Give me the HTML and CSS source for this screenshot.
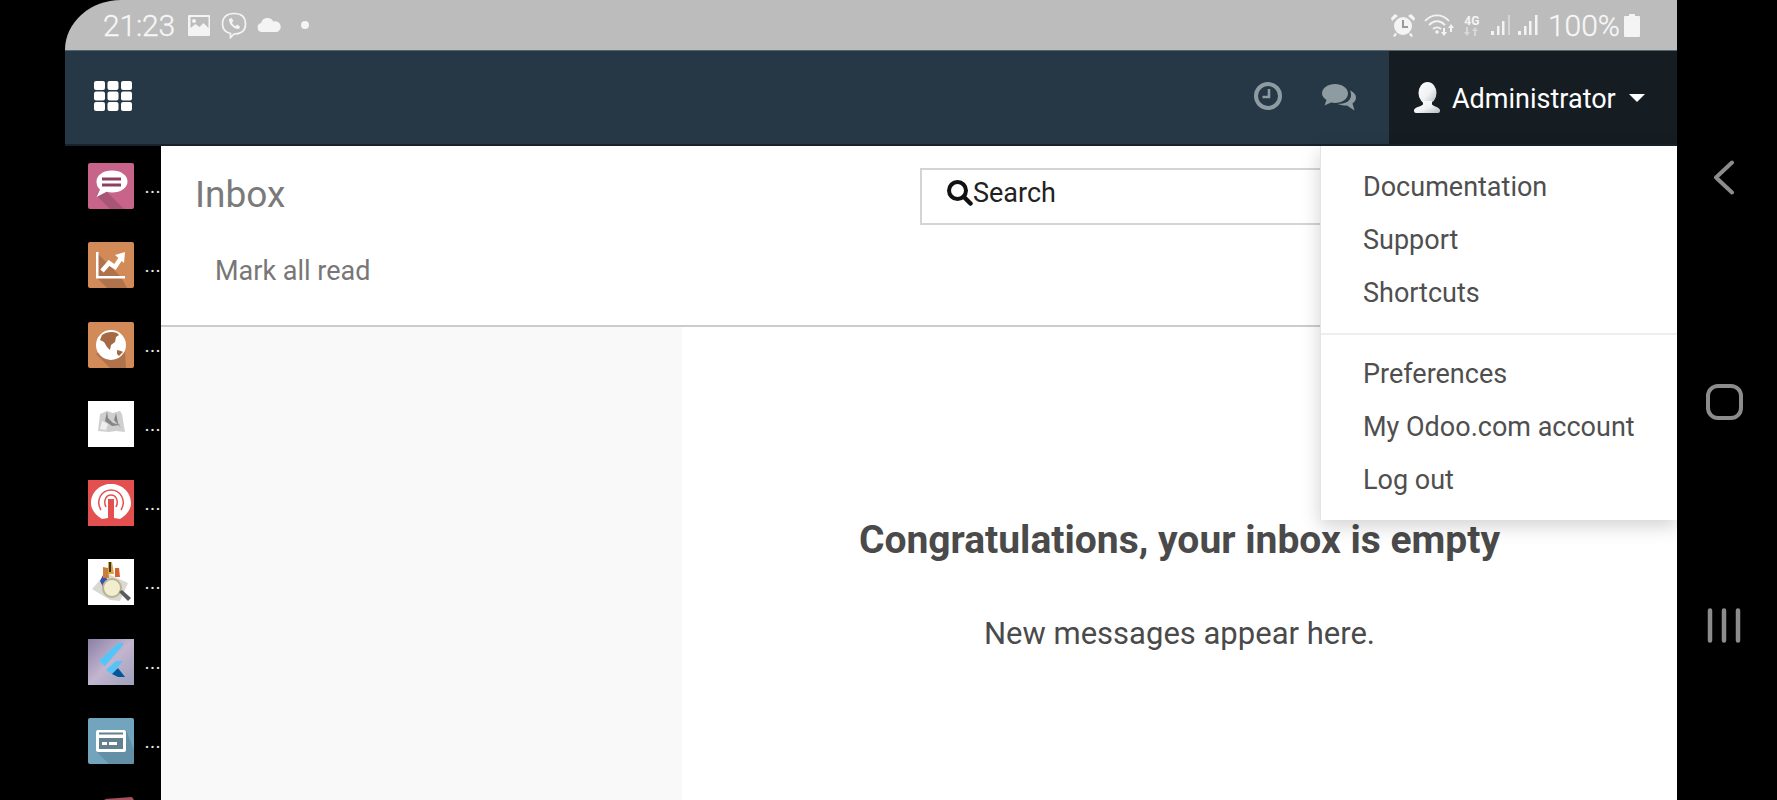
FILE: index.html
```html
<!DOCTYPE html>
<html lang="en">
<head>
<meta charset="utf-8">
<title>Inbox</title>
<link rel="stylesheet" href="styles.css">
</head>
<body>
<div class="device">
  <header class="status">
    <span class="time">21:23</span>
    <svg class="st-image" width="22" height="21" viewBox="0 0 22 21"><path fill="#f4f4f4" fill-rule="evenodd" d="M1 0h20a1 1 0 0 1 1 1v19a1 1 0 0 1-1 1H1a1 1 0 0 1-1-1V1a1 1 0 0 1 1-1zm1.500 2v11l5-4 4 3 4-4 5 5V2zM6 4a2 2 0 1 1 0 4 2 2 0 0 1 0-4z"/></svg>
    <svg class="st-viber" width="26" height="27" viewBox="0 0 26 27"><path fill="none" stroke="#f4f4f4" stroke-width="1.700" d="M13 1.500c7 0 11.500 3.500 11.500 10.500S20 22 13 22l-3.500 3.500V21.500C4 20 1.500 17 1.500 12 1.500 5 6 1.500 13 1.500z"/><path fill="#f4f4f4" d="M8 7l2.500-1 2 3-1.500 1.500c.6 1.800 1.800 3 3.500 3.700L16 12.500l3 2-1 2.500c-5 .5-10.500-5-10-10z"/></svg>
    <svg class="st-cloud" width="25" height="14" viewBox="0 0 25 14"><path fill="#f4f4f4" d="M5 14a4.500 4.500 0 0 1-.8-8.900A6.500 6.500 0 0 1 16.300 3.500 5.500 5.500 0 0 1 20 14z"/></svg>
    <span class="st-dot"></span>
    <span class="st-spacer"></span>
    <svg class="st-alarm" width="26" height="23" viewBox="0 0 26 23"><g fill="#f4f4f4"><path d="M5 0l3 2-6 5-1-3zM21 0l-3 2 6 5 1-3z"/><circle cx="13" cy="12" r="9"/><path d="M5 19l2 1-2 3-2-1zM21 19l-2 1 2 3 2-1z"/></g><path fill="none" stroke="#9a9a9a" stroke-width="2" d="M13 6v7h5"/></svg>
    <svg class="st-wifi" width="32" height="22" viewBox="0 0 32 22"><g fill="none" stroke="#f4f4f4" stroke-width="1.800"><path d="M1 7c7-7.500 17-7.500 24 0"/><path d="M5 11c5-5 11-5 16 0"/><path d="M9 15c3-2.500 5-2.500 8 0"/></g><circle cx="13" cy="18" r="1.800" fill="#f4f4f4"/><path fill="#f4f4f4" d="M19 14h2v4h2l-3 4-3-4h2zM27 10l3 4h-2v4h-2v-4h-2z"/></svg>
    <span class="st-net"><span class="st-4g">4G</span><svg width="17" height="9" viewBox="0 0 17 9"><path fill="#d8d8d8" d="M3 0h2v5h2l-3 4-3-4h2zM12 0l3 4h-2v5h-2V4H9z"/></svg></span>
    <svg class="st-sig" width="20" height="22" viewBox="0 0 20 22"><g fill="#f4f4f4"><rect x="0" y="17" width="3" height="4"/><rect x="6" y="12" width="2.500" height="9"/><rect x="11" y="7" width="2.500" height="14"/></g><rect x="17" y="1" width="2" height="20" fill="#d6d6d6"/></svg>
    <svg class="st-sig2" width="20" height="22" viewBox="0 0 20 22"><g fill="#f4f4f4"><rect x="0" y="17" width="3" height="4"/><rect x="6" y="12" width="2.500" height="9"/><rect x="11" y="7" width="2.500" height="14"/><rect x="17" y="1" width="2.500" height="20"/></g></svg>
    <span class="st-pct">100%</span>
    <svg class="st-batt" width="16" height="23" viewBox="0 0 16 23"><path fill="#f4f4f4" d="M5 0h6v2h4a1 1 0 0 1 1 1v19a1 1 0 0 1-1 1H1a1 1 0 0 1-1-1V3a1 1 0 0 1 1-1h4z"/></svg>
  </header>

  <nav class="navbar">
    <svg class="apps" width="38" height="30" viewBox="0 0 38 30"><g fill="#fff"><rect width="11" height="9" rx="2"/><rect x="13.500" width="11" height="9" rx="2"/><rect x="27" width="11" height="9" rx="2"/><rect y="10.500" width="11" height="9" rx="2"/><rect x="13.500" y="10.500" width="11" height="9" rx="2"/><rect x="27" y="10.500" width="11" height="9" rx="2"/><rect y="21" width="11" height="9" rx="2"/><rect x="13.500" y="21" width="11" height="9" rx="2"/><rect x="27" y="21" width="11" height="9" rx="2"/></g></svg>
    <span class="nav-spacer"></span>
    <svg class="clock" width="28" height="28" viewBox="0 0 28 28"><circle cx="14" cy="14" r="12" fill="none" stroke="#8e9ba1" stroke-width="4"/><path fill="none" stroke="#8e9ba1" stroke-width="2.600" d="M15 7v8H8.500"/></svg>
    <svg class="chat" width="34" height="27" viewBox="0 0 34 27"><path fill="#8e9ba1" d="M13 0c7 0 13 4 13 9.500S20 19 13 19c-1.500 0-3-.2-4-.5L2.500 21.500 4.500 16C1.800 14.300 0 12 0 9.500 0 4 6 0 13 0z"/><path fill="#8e9ba1" d="M28 6.500c3.500 1.500 6 4 6 7 0 2.500-1.500 4.500-3.500 6l2 7-7.500-5c-3 .2-7-.5-9.500-1.500 8 0 13-3 13.500-8 .1-2-.2-4-1-5.500z"/></svg>
    <div class="user">
      <svg class="avatar" width="26" height="31" viewBox="0 0 26 31"><defs><linearGradient id="av" x1="0" y1="0" x2="1" y2="1"><stop offset="0" stop-color="#fff"/><stop offset=".55" stop-color="#eff1f3"/><stop offset="1" stop-color="#b4b9be"/></linearGradient></defs><ellipse cx="13.500" cy="11" rx="9" ry="11" fill="url(#av)"/><path fill="url(#av)" d="M9 19h9v3.500c2.500 2.500 7 2.500 8 5.500.2 1.500-.5 3-2 3H2c-1.500 0-2.200-1.500-2-3 1-3 6.500-3 9-5.500z"/></svg>
      <span class="user-name">Administrator</span>
      <span class="caret"></span>
    </div>
  </nav>

  <div class="body-row">
    <aside class="sidebar">
      <div class="app">
        <svg width="46" height="46" viewBox="0 0 46 46"><rect width="46" height="46" rx="2" fill="#c8638a"/><path fill="#8f4a66" d="M8 32L22 46h14L14 24z" opacity=".55"/><path fill="#fff" d="M24 7.500c9 0 15.500 4.800 15.500 11S33 29.500 24 29.500c-2 0-3.800-.2-5.500-.7L8.500 34l3.500-7.500C9.500 24.500 8.500 21.500 8.500 18.500c0-6.200 6.500-11 15.500-11z"/><path fill="#8e3f5e" d="M14 14.500h19v3H14zM14 20.500h19v3H14z"/></svg>
        <span class="more">...</span>
      </div>
      <div class="app">
        <svg width="46" height="46" viewBox="0 0 46 46"><rect width="46" height="46" rx="2" fill="#d28a58"/><path fill="#a66c47" d="M8 10v25l11 11h20L33 35z" opacity=".8"/><path fill="#fff" d="M8 10h2.500v24H37v2.500H8z"/><path fill="none" stroke="#fff" stroke-width="4.500" d="M14 29l7-8 6 4 6-9"/><path fill="#fff" d="M27 13l10-3-1 11z"/></svg>
        <span class="more">...</span>
      </div>
      <div class="app">
        <svg width="46" height="46" viewBox="0 0 46 46"><rect width="46" height="46" rx="2" fill="#d28a58"/><path fill="#a66c47" d="M8 32L22 46h16L36 14z" opacity=".8"/><circle cx="23" cy="23" r="15" fill="#fff"/><path fill="#a56a45" d="M14 13c4-3 10-4 15-2l2 2-3 2-1 5-4 3-1 5-3-3-3-5-4-2zM29 28l4 1 2 1-4 4-2-2z"/></svg>
        <span class="more">...</span>
      </div>
      <div class="app">
        <svg width="46" height="46" viewBox="0 0 46 46"><rect width="46" height="46" fill="#fff"/><path fill="#cfcfcf" d="M12 13l7-3 6 2 7-2 2 3 3 18-9-1-7 1-11-1z"/><path fill="#858585" d="M19 10l1 7 5 5 7 2-8 1-7-5zM28 12l2 10 3 5-7-8z"/><path fill="#efefef" d="M14 20l6 3-2 6-6-1z"/></svg>
        <span class="more">...</span>
      </div>
      <div class="app">
        <svg width="46" height="46" viewBox="0 0 46 46"><rect width="46" height="46" fill="#e4504f"/><path fill="#fff" d="M14 39C8 35.500 3 30 3 23 3 12 12 4 23 4s20 8 20 19c0 7-5 12.500-11 16l-6-1V20h-6v18z"/><path fill="none" stroke="#e4504f" stroke-width="1.500" d="M13 30c-6-10 1-20 10-20s16 10 10 20M18 27c-3-6 0-12 5-12s8 6 5 12"/><rect x="20" y="19" width="6" height="20" fill="#e4504f"/></svg>
        <span class="more">...</span>
      </div>
      <div class="app">
        <svg width="46" height="46" viewBox="0 0 46 46"><rect width="46" height="46" fill="#fff"/><path fill="#d9d9d2" d="M4 30L18 14l22 10-8 18-10-1z"/><path fill="#3d4fb0" d="M12 22l4-8 5 10-4 8z"/><path fill="#c97f3a" d="M15 8l5 1 1 10-6 0z"/><path fill="#e0a23c" d="M20 3h4l2 12h-6z"/><path fill="#3a3a2a" d="M21 3h2v10h-2z"/><path fill="#d8622e" d="M27 9h4l1 9h-5z"/><circle cx="24" cy="29" r="9" fill="#f3edd0" stroke="#b9b293" stroke-width="2"/><path fill="#5a5a5a" d="M31 33l3-2 9 8-3 3z"/></svg>
        <span class="more">...</span>
      </div>
      <div class="app">
        <svg width="46" height="46" viewBox="0 0 46 46"><defs><linearGradient id="fl" x1="0" y1="0" x2="1" y2="1"><stop offset="0" stop-color="#8a7fa6"/><stop offset=".5" stop-color="#c3b5cf"/><stop offset="1" stop-color="#9ea0bd"/></linearGradient></defs><rect width="46" height="46" fill="url(#fl)"/><path fill="#54c5f8" d="M11 22L30 4h5v2L17 27z"/><path fill="#54c5f8" d="M18 31l10-9h7L24 35z"/><path fill="#01579b" d="M24 35l6-6 7 9h-7z"/></svg>
        <span class="more">...</span>
      </div>
      <div class="app">
        <svg width="46" height="46" viewBox="0 0 46 46"><rect width="46" height="46" rx="2" fill="#72a5bd"/><path fill="#5f8ba1" d="M8 33l13 13h25V32L38 12z" opacity=".8"/><rect x="8" y="12" width="30" height="22" rx="2" fill="#fff"/><rect x="11" y="14.500" width="24" height="2" fill="#63808e"/><rect x="11" y="20" width="24" height="11" fill="#63808e"/><rect x="14" y="24" width="5" height="3" fill="#fff"/><rect x="21" y="24" width="8" height="3" fill="#fff"/></svg>
        <span class="more">...</span>
      </div>
      <div class="app">
        <svg width="46" height="46" viewBox="0 0 46 46"><path fill="#a5505c" d="M16 2L44 0l2 3H18z"/></svg>
        <span class="more more-hidden">...</span>
      </div>
    </aside>

    <main class="content">
      <section class="panel">
        <div class="panel-top">
          <h1 class="title">Inbox</h1>
          <div class="search">
            <svg class="search-icon" width="26" height="26" viewBox="0 0 26 26"><circle cx="10.500" cy="10.500" r="8.500" fill="none" stroke="#111" stroke-width="4"/><path stroke="#111" stroke-width="4.500" stroke-linecap="round" d="M17 17l6.500 6.500"/></svg>
            <span class="search-label">Search</span>
          </div>
        </div>
        <a class="mark-read">Mark all read</a>
      </section>
      <section class="panes">
        <div class="pane-left"></div>
        <div class="pane-right">
          <h2 class="empty-title">Congratulations, your inbox is empty</h2>
          <p class="empty-text">New messages appear here.</p>
        </div>
      </section>
    </main>

    <div class="menu">
      <a class="menu-item">Documentation</a>
      <a class="menu-item">Support</a>
      <a class="menu-item">Shortcuts</a>
      <div class="menu-sep"></div>
      <a class="menu-item">Preferences</a>
      <a class="menu-item">My Odoo.com account</a>
      <a class="menu-item">Log out</a>
    </div>
  </div>
</div>

<div class="softkeys">
  <svg width="22" height="35" viewBox="0 0 22 35"><path fill="none" stroke="#8c8c8c" stroke-width="4" stroke-linecap="round" stroke-linejoin="round" d="M19 2.500L3 17.500 19 32.500"/></svg>
  <svg width="37" height="36" viewBox="0 0 37 36"><rect x="2" y="2" width="33" height="32" rx="10" fill="none" stroke="#8c8c8c" stroke-width="4"/></svg>
  <svg width="34" height="35" viewBox="0 0 34 35"><g stroke="#8c8c8c" stroke-width="4.500" stroke-linecap="round"><path d="M3 2.500v30M17 2.500v30M31 2.500v30"/></g></svg>
</div>
</body>
</html>
```
FILE: styles.css
```css
* { box-sizing: border-box; }
html, body { margin: 0; height: 800px; overflow: hidden; }
body {
  display: flex;
  width: 1777px;
  background: #000;
  font-family: Roboto, "Noto Sans", sans-serif;
}
.device {
  width: 1612px;
  height: 800px;
  margin-left: 65px;
  display: flex;
  flex-direction: column;
  overflow: hidden;
}
.status {
  height: 50px;
  flex: none;
  display: flex;
  align-items: center;
  background: #bcbcbc;
  border-top-left-radius: 56px 50px;
  padding: 0 37px 0 38px;
}
.time { font-size: 30px; font-weight: 300; color: #f7f7f7; margin-right: 13px; letter-spacing: -.2px; -webkit-text-stroke: .3px #f7f7f7; }
.st-image { margin-right: 11px; }
.st-viber { margin-right: 10px; }
.st-cloud { margin-right: 19px; }
.st-dot { width: 8px; height: 8px; border-radius: 50%; background: #f4f4f4; }
.st-spacer { flex: 1; }
.st-alarm { margin-right: 8px; }
.st-wifi { margin-right: 7px; }
.st-net { display: flex; flex-direction: column; align-items: center; width: 18px; margin-right: 10px; }
.st-4g { font-size: 12px; font-weight: 700; line-height: 12px; color: #f4f4f4; }
.st-sig { margin-right: 7px; }
.st-sig2 { margin-right: 10px; }
.st-pct { font-size: 30px; font-weight: 300; color: #f7f7f7; margin-right: 4px; -webkit-text-stroke: .3px #f7f7f7; }
.navbar {
  height: 96px;
  flex: none;
  display: flex;
  align-items: center;
  background: #263845;
  border-top: 1px solid #52656f;
  border-bottom: 2px solid #16232c;
  padding-left: 29px;
}
.apps { margin-bottom: 3px; }
.nav-spacer { flex: 1; }
.clock { margin: 0 40px 3px 0; }
.chat { margin: 0 33px 0 0; }
.user {
  width: 288px;
  height: 100%;
  display: flex;
  align-items: center;
  background: #151d23;
  padding-left: 25px;
}
.user-name { font-size: 27px; color: #fff; margin-left: 12px; position: relative; top: 1px; }
.caret {
  margin-left: 13px;
  border-left: 8px solid transparent;
  border-right: 8px solid transparent;
  border-top: 8px solid #fff;
}
.body-row { flex: 1; min-height: 0; display: flex; position: relative; }
.sidebar {
  width: 96px;
  flex: none;
  padding: 17px 0 0 23px;
  overflow: hidden;
  background: #000;
}
.app { height: 79.25px; display: flex; align-items: flex-start; }
.app svg { flex: none; display: block; }
.more {
  color: #eee;
  font-size: 14px;
  font-weight: 700;
  line-height: 14px;
  letter-spacing: 1.5px;
  margin: 18px 0 0 11px;
}
.more-hidden { margin-top: 0; visibility: hidden; }
.content { flex: 1; min-width: 0; display: flex; flex-direction: column; background: #fff; }
.panel { height: 181px; flex: none; border-bottom: 2px solid #ccc; }
.panel-top { display: flex; height: 100px; padding: 22px 0 0 34px; }
.title { margin: 2px 0 0; width: 725px; font-size: 37px; font-weight: 400; line-height: 50px; color: #7a7a7a; }
.search {
  flex: 1;
  height: 57px;
  display: flex;
  align-items: center;
  border: 2px solid #d4d4d4;
  padding: 0 0 8px 25px;
}
.search-label { font-size: 27px; color: #222; }
.mark-read { display: block; margin-left: 54px; font-size: 27px; line-height: 50px; color: #777; }
.panes { flex: 1; min-height: 0; display: flex; }
.pane-left { width: 521px; flex: none; background: #f9f9f9; }
.pane-right { flex: 1; text-align: center; color: #4a4a4a; padding-top: 188px; }
.empty-title { margin: 0; font-size: 39px; font-weight: 700; line-height: 50px; }
.empty-text { margin: 44px 0 0; font-size: 31px; line-height: 50px; }
.menu {
  position: absolute;
  top: 0;
  right: 0;
  width: 357px;
  height: 374px;
  padding: 15px 0 0;
  background: #fff;
  border-left: 1px solid #e4e4e4;
  box-shadow: 0 6px 18px rgba(0, 0, 0, .18);
}
.menu-item { display: block; height: 53px; padding-left: 42px; font-size: 27px; line-height: 53px; color: #4f4f4f; }
.menu-sep { height: 2px; margin: 13px 0 13px; background: #eee; }
.softkeys {
  width: 100px;
  flex: none;
  height: 800px;
  padding: 160px 6px 0 0;
  display: flex;
  flex-direction: column;
  align-items: center;
  gap: 188.500px;
}
.softkeys svg { display: block; flex: none; }
```
